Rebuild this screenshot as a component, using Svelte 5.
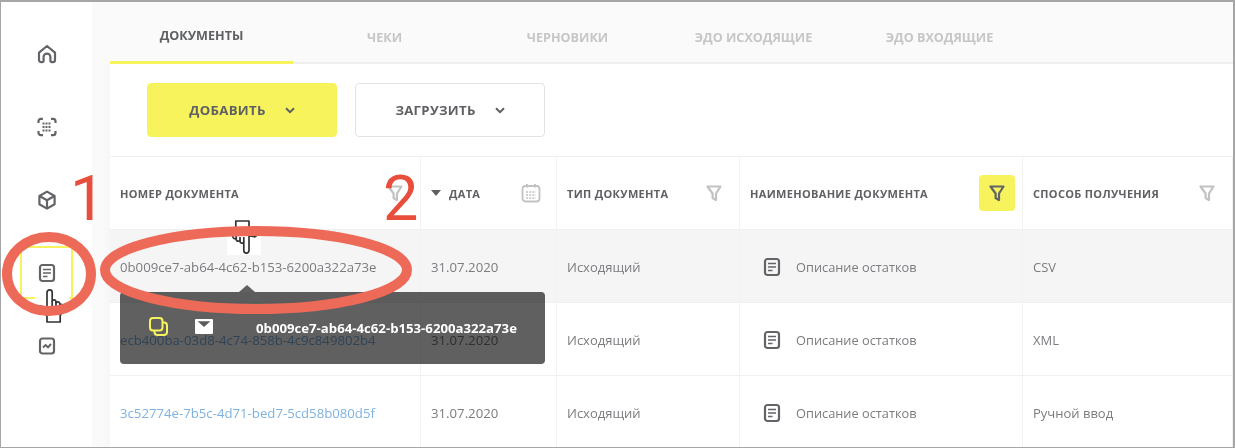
<script>
  const tabs = ['Документы', 'Чеки', 'Черновики', 'ЭДО исходящие', 'ЭДО входящие'];
  const columns = [
    { title: 'Номер документа', icon: 'filter' },
    { title: 'Дата', icon: 'calendar', sorted: true },
    { title: 'Тип документа', icon: 'filter' },
    { title: 'Наименование документа', icon: 'filter', active: true },
    { title: 'Способ получения', icon: 'filter' }
  ];
  const rows = [
    { id: '0b009ce7-ab64-4c62-b153-6200a322a73e', source: 'CSV', hovered: true },
    { id: 'ecb400ba-03d8-4c74-858b-4c9c849802b4', source: 'XML' },
    { id: '3c52774e-7b5c-4d71-bed7-5cd58b080d5f', source: 'Ручной ввод' }
  ];
</script>

{#snippet docIcon()}
  <svg class="doc-icon" viewBox="0 0 18 20" width="18" height="20" fill="none" stroke="#636468" stroke-width="2.2">
    <rect x="2" y="2" width="14" height="16" rx="2.5" />
    <path d="M5 6.5h8M5 10h8M5 13.5h4.5" stroke-width="1.7" />
  </svg>
{/snippet}

{#snippet chevron()}
  <svg viewBox="0 0 10 7" width="10" height="7" fill="none" stroke="#5f6063" stroke-width="2">
    <path d="M1 1.2l4 4 4-4" />
  </svg>
{/snippet}

{#snippet hand()}
  <path d="M12 19V4.5a2.6 2.6 0 0 1 5.2 0V13a2 2 0 0 1 3.8.6V15a2 2 0 0 1 3.8.5V17a2 2 0 0 1 3.4 1.4V22l-3 5.5V34H12v-6L5 21.5c-1.6-1.8.4-4 2.4-3Z" />
  <path d="M17.2 13v5M21 14v4M24.8 16v3" />
{/snippet}

<div class="frame">
  <nav class="sidebar">
    <div class="nav-item">
      <svg viewBox="0 0 20 20" width="20" height="20" fill="none" stroke="#636468" stroke-width="2.2" stroke-linejoin="round">
        <path d="M2 8.6 10 2l8 6.6V16a2.2 2.2 0 0 1-2.2 2.2H15a1.6 1.6 0 0 1-1.6-1.6V13a3.4 3.4 0 0 0-6.8 0v3.6A1.6 1.6 0 0 1 5 18.2h-.8A2.2 2.2 0 0 1 2 16Z" />
      </svg>
    </div>
    <div class="nav-item">
      <svg viewBox="0 0 20 20" width="20" height="20" fill="none" stroke="#636468" stroke-width="2.2">
        <path d="M1.5 6V4.2a2.4 2.4 0 0 1 2.4-2.4h2M14 1.8h2.1a2.4 2.4 0 0 1 2.4 2.4V6M18.5 14v1.8a2.4 2.4 0 0 1-2.4 2.4H14M6 18.2H3.9a2.4 2.4 0 0 1-2.4-2.4V14" />
        <path d="M5.5 6.5h9M5.5 10h9M5.5 13.5h9" stroke-width="2" stroke-dasharray="2 1" />
      </svg>
    </div>
    <div class="nav-item">
      <svg viewBox="0 0 20 20" width="20" height="20" fill="none" stroke="#636468" stroke-width="2.2" stroke-linejoin="round">
        <path d="M10 1.6 17.6 6v8.2L10 18.6l-7.6-4.4V6Z" />
        <path d="M2.6 6 10 10.2 17.4 6M10 10.2v8" />
      </svg>
    </div>
    <div class="nav-item current">
      <svg viewBox="0 0 18 20" width="18" height="20" fill="none" stroke="#636468" stroke-width="2.2">
        <rect x="2" y="2" width="14" height="16" rx="2.5" />
        <path d="M5 6.5h8M5 10h8M5 13.5h4.5" stroke-width="1.7" />
      </svg>
    </div>
    <div class="nav-item">
      <svg viewBox="0 0 18 20" width="18" height="20" fill="none" stroke="#636468" stroke-width="2.2">
        <rect x="2" y="2.5" width="14" height="15" rx="2.5" />
        <path d="M5 11.5l2.6-2.4 2.4 2.2L13 8" stroke-width="2" />
      </svg>
    </div>
  </nav>

  <main class="main">
    <div class="tabs">
      {#each tabs as tab, i}
        <div class="tab" class:active={i === 0}>{tab}</div>
      {/each}
    </div>

    <div class="content">
      <div class="toolbar">
        <button type="button" class="btn btn-primary">Добавить {@render chevron()}</button>
        <button type="button" class="btn">Загрузить {@render chevron()}</button>
      </div>

      <div class="table">
        {#each columns as col}
          <div class="th">
            {#if col.sorted}<span class="sort"></span>{/if}
            <span class="th-title">{col.title}</span>
            <span class="th-icon" class:on={col.active}>
              {#if col.icon === 'filter'}
                <svg viewBox="0 0 16 17" width="16" height="17" fill="none" stroke={col.active ? '#636468' : '#c2c2c2'} stroke-width="2.2" stroke-linejoin="round">
                  <path d="M1.5 1.5h13L10 8.5v6.6L6.6 13V8.5Z" />
                </svg>
              {:else}
                <svg viewBox="0 0 20 20" width="20" height="20" fill="none" stroke="#c2c2c2" stroke-width="1.8">
                  <rect x="1.5" y="3" width="17" height="15.5" rx="3" />
                  <path d="M6 1v3.5M14 1v3.5" />
                  <path d="M5 9h10M5 12h10M5 15h10" stroke-width="1.6" stroke-dasharray="2 1.2" />
                </svg>
              {/if}
            </span>
          </div>
        {/each}

        {#each rows as row}
          <div class="td code" class:hovered={row.hovered}>
            <span class:link={!row.hovered}>{row.id}</span>
          </div>
          <div class="td code" class:hovered={row.hovered}>31.07.2020</div>
          <div class="td" class:hovered={row.hovered}>Исходящий</div>
          <div class="td name" class:hovered={row.hovered}>{@render docIcon()} Описание остатков</div>
          <div class="td" class:hovered={row.hovered}>{row.source}</div>
        {/each}
      </div>
    </div>
  </main>

  <div class="tooltip">
    <div class="tooltip-inner">
      <svg class="copy" viewBox="0 0 19 19" width="19" height="19" fill="none" stroke="#f6f35c" stroke-width="2">
        <rect x="1" y="1" width="12.5" height="12.5" rx="3" />
        <path d="M13.5 5.5H15a3 3 0 0 1 3 3V15a3 3 0 0 1-3 3H8.5a3 3 0 0 1-3-3v-1.5" />
      </svg>
      <svg class="mail" viewBox="0 0 18 15" width="18" height="15">
        <rect width="18" height="15" rx="1" fill="#fff" />
        <path d="M2.6 2.2h12.8L9 8Z" fill="#5c5c5c" />
      </svg>
      <span class="tooltip-text">0b009ce7-ab64-4c62-b153-6200a322a73e</span>
    </div>
  </div>

  <svg class="cursor cursor-up" viewBox="0 0 34 37" width="34" height="37" fill="#fff" stroke="#333" stroke-width="1.7" stroke-linejoin="round">
    {@render hand()}
  </svg>
  <svg class="cursor cursor-down" viewBox="0 0 34 37" width="34" height="37" fill="#fff" stroke="#333" stroke-width="1.7" stroke-linejoin="round">
    {@render hand()}
  </svg>

  <svg class="marks" viewBox="0 0 1235 448" width="1235" height="448" fill="none" stroke="#ee6a58" stroke-width="10">
    <ellipse cx="49" cy="274" rx="42" ry="37" />
    <ellipse cx="256" cy="270" rx="151" ry="39" />
  </svg>

  <span class="step step-1">1</span>
  <span class="step step-2">2</span>
</div>

<style>
  :global(body) {
    margin: 0;
    background: #fff;
  }
  .frame {
    position: relative;
    box-sizing: border-box;
    width: 1235px;
    height: 448px;
    display: flex;
    overflow: hidden;
    border-style: solid;
    border-color: #a6a6a6;
    border-width: 2px 2px 1px 1px;
    font-family: 'Open Sans', 'Noto Sans', sans-serif;
    color: #7b7c7f;
  }
  .sidebar {
    flex: 0 0 91px;
    display: flex;
    flex-direction: column;
    background: #fff;
    padding-top: 25px;
  }
  .nav-item {
    box-sizing: border-box;
    width: 53px;
    height: 53px;
    margin: 0 0 20px 19px;
    display: flex;
    align-items: center;
    justify-content: center;
  }
  .nav-item.current {
    border: 2px solid #f6f35c;
  }
  .main {
    flex: 1;
    min-width: 0;
    background: #fafafa;
    padding-left: 18px;
  }
  .tabs {
    display: grid;
    grid-template-columns: 183px 183px 183px 189px 183px;
    height: 60px;
    border-bottom: 2px solid #f0f0f0;
    box-sizing: content-box;
  }
  .tab {
    display: flex;
    align-items: center;
    justify-content: center;
    padding-top: 8px;
    box-sizing: border-box;
    height: 62px;
    font-size: 12.6px;
    font-weight: 700;
    text-transform: uppercase;
    color: #c6c6c6;
  }
  .tab.active {
    color: #5f6063;
    border-bottom: 3px solid #f6f35c;
    position: relative;
  }
  .content {
    background: #fff;
    box-shadow: -4px 0 6px rgba(0, 0, 0, 0.015);
  }
  .toolbar {
    box-sizing: border-box;
    height: 93px;
    display: flex;
    gap: 18px;
    padding: 19px 0 0 37px;
    border-bottom: 1px solid #f0f0f0;
  }
  .btn {
    box-sizing: border-box;
    width: 190px;
    height: 54px;
    display: flex;
    align-items: center;
    justify-content: center;
    gap: 19px;
    border: 1px solid #e3e3e3;
    border-radius: 4px;
    background: #fff;
    font-family: inherit;
    font-size: 13.2px;
    font-weight: 700;
    letter-spacing: 0.3px;
    text-transform: uppercase;
    color: #5f6063;
  }
  .btn-primary {
    background: #f6f35c;
    border-color: #f6f35c;
  }
  .table {
    display: grid;
    grid-template-columns: 311px 136px 183px 283px 1fr;
    grid-template-rows: repeat(4, 73px);
  }
  .th,
  .td {
    box-sizing: border-box;
    display: flex;
    align-items: center;
    padding: 0 10px;
    border-bottom: 1px solid #f0f0f0;
    border-right: 1px solid #f2f2f2;
    white-space: nowrap;
  }
  .th {
    font-size: 11px;
    font-weight: 700;
    letter-spacing: 0.32px;
    text-transform: uppercase;
    color: #5f6063;
    position: relative;
  }
  .th-icon {
    position: absolute;
    right: 7px;
    top: 18px;
    width: 36px;
    height: 36px;
    border-radius: 4px;
    display: flex;
    align-items: center;
    justify-content: center;
  }
  .th-icon.on {
    background: #f6f35c;
  }
  .sort {
    width: 0;
    height: 0;
    margin-right: 8px;
    border-left: 5px solid transparent;
    border-right: 5px solid transparent;
    border-top: 6px solid #5f6063;
  }
  .td {
    font-size: 13px;
    padding-top: 2px;
  }
  .td.code {
    font-size: 13.2px;
  }
  .td.hovered {
    background: #f5f5f5;
  }
  .link {
    color: #7fb2e0;
  }
  .name {
    padding-left: 23px;
    font-size: 12.8px;
  }
  .doc-icon {
    margin-right: 15px;
  }
  .tooltip {
    position: absolute;
    left: 119px;
    top: 290px;
    width: 425px;
    height: 72px;
  }
  .tooltip::before {
    content: '';
    position: absolute;
    inset: 0;
    border-radius: 4px;
    background: #606060;
    mix-blend-mode: multiply;
  }
  .tooltip::after {
    content: '';
    position: absolute;
    left: 119px;
    top: -7px;
    width: 0;
    height: 0;
    border-left: 8px solid transparent;
    border-right: 8px solid transparent;
    border-bottom: 7px solid #606060;
  }
  .tooltip-inner {
    position: relative;
    display: flex;
    align-items: center;
    height: 72px;
    padding-left: 29px;
    box-sizing: border-box;
  }
  .copy {
    margin-bottom: 3px;
  }
  .mail {
    margin: 0 0 3px 27px;
  }
  .tooltip-text {
    margin-left: 43px;
    font-size: 13.2px;
    font-weight: 700;
    color: #fff;
  }
  .cursor {
    position: absolute;
    background: #fff;
  }
  .cursor-up {
    left: 34px;
    top: 286px;
  }
  .cursor-down {
    left: 226px;
    top: 216px;
    transform: rotate(180deg);
  }
  .marks {
    position: absolute;
    left: -1px;
    top: -2px;
  }
  .step {
    position: absolute;
    font-family: Roboto, 'Liberation Sans', sans-serif;
    font-size: 63px;
    line-height: 1;
    color: #e94e3d;
  }
  .step-1 {
    left: 69px;
    top: 165px;
  }
  .step-2 {
    left: 382px;
    top: 165px;
  }
</style>
